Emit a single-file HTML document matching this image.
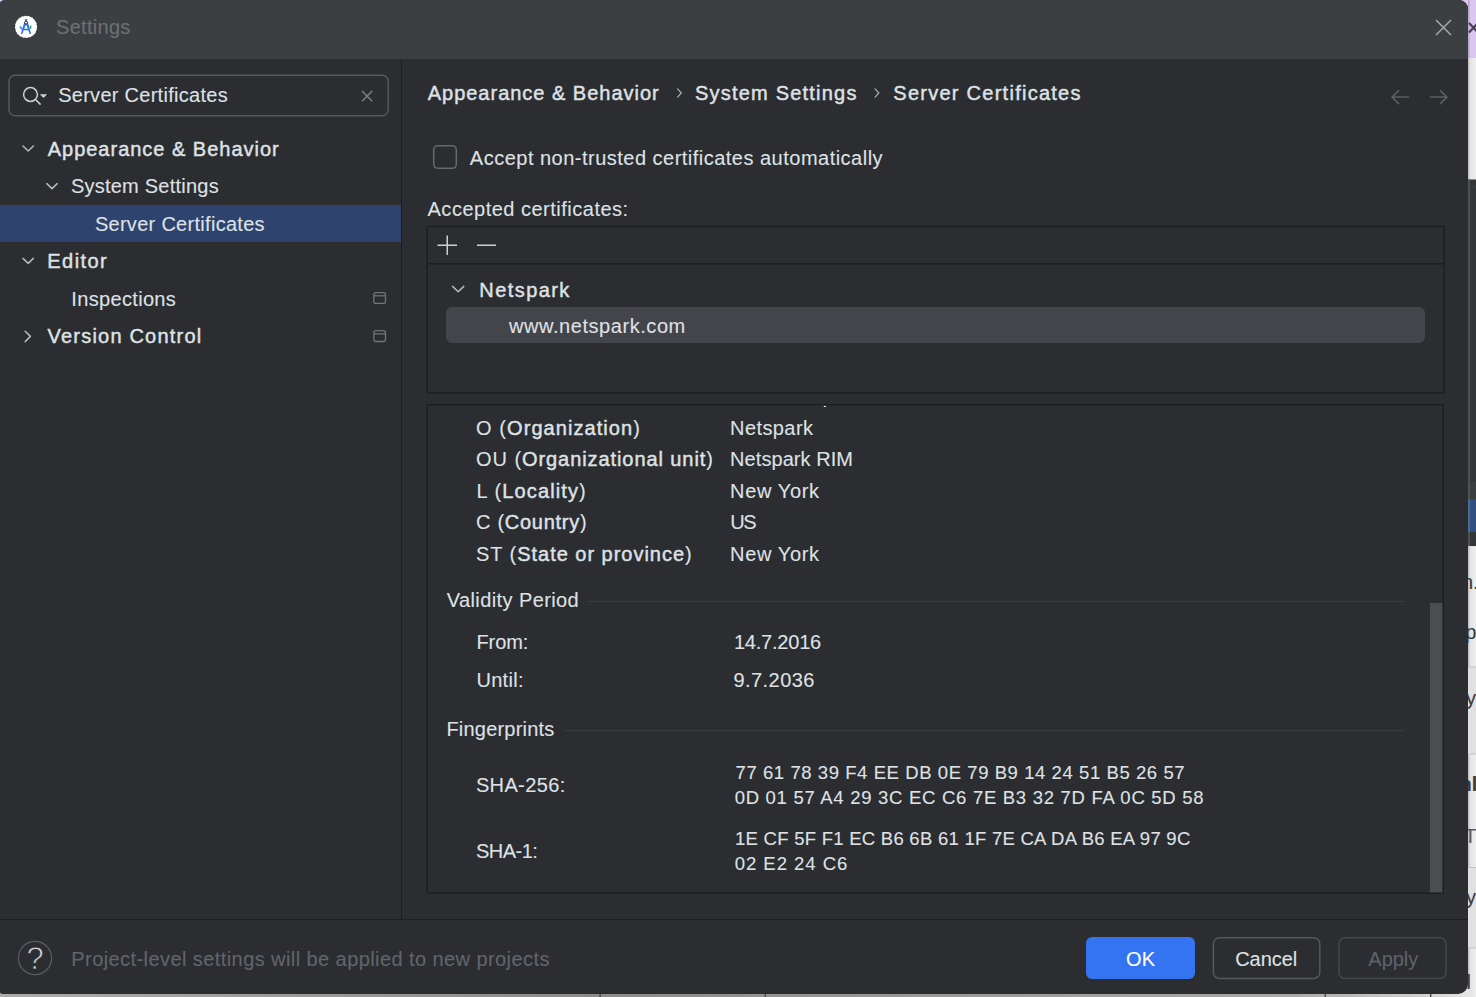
<!DOCTYPE html>
<html lang="en"><head><meta charset="utf-8"><title>Settings</title>
<style>
html,body{margin:0;padding:0}
body{width:1476px;height:997px;overflow:hidden;position:relative;background:#f2f2f2;font-family:"Liberation Sans",sans-serif;}
#back{position:absolute;left:0;top:0;width:1476px;height:997px;}
#dlg{position:absolute;left:0;top:0;width:1468px;height:994px;background:#2b2d30;border-radius:6px 9px 10px 4px / 3px 9px 10px 2px;overflow:hidden;}
#titlebar{position:absolute;left:0;top:0;width:1468px;height:59px;background:#3c3f41;}
#sel{position:absolute;left:0;top:205px;width:401px;height:37px;background:#2e436e;}
#vdiv{position:absolute;left:401px;top:59px;width:1px;height:860px;background:#1e1f22;}
#hdiv{position:absolute;left:0;top:919px;width:1468px;height:1px;background:#1e1f22;}
#hl{position:absolute;left:446px;top:307px;width:979px;height:36px;background:#43454a;border-radius:6px;}
#ok{position:absolute;left:1086px;top:937px;width:109px;height:42px;background:#3574f0;border-radius:6px;}
.t{position:absolute;white-space:pre;line-height:1;}
.t{-webkit-text-stroke:0.1px}
.t b,.sb{font-weight:400;-webkit-text-stroke:0.45px}
.t.q{-webkit-text-stroke:0.75px #2b2d30}
.bgt{font-size:20px;color:#3a3a3a;}
svg{position:absolute;left:0;top:0;}
.grp{display:contents}
</style></head><body>
<svg id="back" width="1476" height="997" viewBox="0 0 1476 997">
 <defs>
  <linearGradient id="gb" x1="0" x2="1" y1="0" y2="0">
   <stop offset="0" stop-color="#ababab"/><stop offset="0.4" stop-color="#8b8b8b"/><stop offset="0.88" stop-color="#a8a8a8"/><stop offset="0.97" stop-color="#d0d0d0"/><stop offset="1" stop-color="#e6e6e6"/>
  </linearGradient>
  <linearGradient id="gs" x1="0" x2="1" y1="0" y2="0">
   <stop offset="0" stop-color="#bdbdbd"/><stop offset="0.3" stop-color="#e4e4e4"/><stop offset="1" stop-color="#efefef"/>
  </linearGradient>
 </defs>
 <rect x="0" y="0" width="1476" height="60" fill="#dac6f0"/>
 <rect x="1468" y="0" width="1.6" height="58" fill="#b9a9cc"/>
 <path d="M1469 23 L1478 32.5 M1478 23 L1469 32.5" stroke="#473f55" stroke-width="2.2"/>
 <rect x="1460" y="58" width="16" height="122" fill="#ececec"/>
 <rect x="1468" y="58" width="8" height="122" fill="url(#gs)"/>
 <rect x="1460" y="179.5" width="16" height="367" fill="#333537"/>
 <rect x="1468" y="179.5" width="2" height="367" fill="#4f5254"/>
 <rect x="1470" y="186.5" width="6" height="1" fill="#3f4143"/>
 <rect x="1470" y="482" width="6" height="1.2" fill="#26282a"/>
 <rect x="1470" y="482" width="6" height="17" fill="#3b3d3f"/>
 <rect x="1468" y="499.3" width="8" height="32.7" fill="#305080"/>
 <rect x="1468" y="499.3" width="2" height="32.7" fill="#4d6a92"/>
 <rect x="1460" y="546.3" width="16" height="451" fill="#ececec"/>
 <rect x="1468" y="546.3" width="8" height="451" fill="url(#gs)"/>
 <rect x="1468" y="667" width="8" height="87" fill="#e1e1e1"/>
 <rect x="1468" y="867.5" width="8" height="80.5" fill="#e1e1e1"/>
 <rect x="1468" y="666.5" width="8" height="1" fill="#c4c4c4"/>
 <rect x="1468" y="753.5" width="8" height="1" fill="#c4c4c4"/>
 <rect x="1468" y="867" width="8" height="1" fill="#c4c4c4"/>
 <rect x="1468" y="947.5" width="8" height="1" fill="#c4c4c4"/>
 <rect x="0" y="988" width="1470" height="9" fill="url(#gb)"/>
 <rect x="599.4" y="994" width="1.4" height="3" fill="#4a4a4a"/>
 <rect x="764.6" y="994" width="1.4" height="3" fill="#4a4a4a"/>
 <rect x="1324.6" y="994" width="1.4" height="3" fill="#4a4a4a"/>
 <rect x="1430" y="994" width="1.4" height="3" fill="#4a4a4a"/>
</svg>
<span class="t bgt" style="left:1462px;top:572.4px;">n.</span>
<span class="t bgt" style="left:1465.3px;top:622px;">p</span>
<span class="t bgt" style="left:1466px;top:688px;">y</span>
<span class="t bgt" style="left:1459.5px;top:773.5px;font-weight:700;">nl</span>
<span class="t bgt" style="left:1464.2px;top:826.4px;color:#5a5a5a">T</span>
<span class="t bgt" style="left:1466px;top:886.5px;">y</span>
<span class="t bgt" style="left:1466.6px;top:972px;">l</span>
<div id="dlg">
 <div id="titlebar"></div>
 <div id="sel"></div>
 <div id="vdiv"></div>
 <div id="hdiv"></div>
 <div id="hl"></div>
 <div id="ok"></div>
 <svg width="1468" height="994" viewBox="0 0 1468 994" fill="none">
  <!-- app icon -->
  <circle cx="26.05" cy="26.95" r="11.1" fill="#ffffff"/>
  <circle cx="26.05" cy="26.95" r="11.3" stroke="#33363a" stroke-width="0.9" stroke-dasharray="1.6 1.95"/>
  <path d="M25.05 19 h2 v2.4 h-2z" fill="#3a7cf2"/>
  <path d="M24.1 22.8 L26.6 22.8 L22.3 34 L20.8 34 Z M25.5 22.8 L28 22.8 L31.2 34 L29.7 34 Z" fill="#2f72ec"/>
  <path d="M23.3 29.5 H28.9" stroke="#2f72ec" stroke-width="1.5"/>
  <path d="M19.9 26.4 L22.4 29.6" stroke="#3f86f6" stroke-width="1.7"/>
  <circle cx="26.05" cy="22.6" r="1.5" fill="#ffffff" stroke="#20242a" stroke-width="1"/>
  <rect x="29.8" y="25.4" width="1.5" height="3.4" fill="#3aa757"/>
  <!-- close -->
  <path d="M1436 20 L1451 35 M1451 20 L1436 35" stroke="#a4a7ac" stroke-width="1.5"/>
  <!-- search box -->
  <rect x="9" y="75.3" width="379.2" height="40.4" rx="6" stroke="#55585e" stroke-width="1.5"/>
  <circle cx="30.5" cy="94.5" r="6.9" stroke="#ced0d6" stroke-width="1.5"/>
  <path d="M35.5 99.5 L40.6 104.6" stroke="#ced0d6" stroke-width="1.5"/>
  <path d="M39.8 94.3 H47.2 L43.5 98.1 Z" fill="#ced0d6"/>
  <path d="M362 91 L372.2 101.2 M372.2 91 L362 101.2" stroke="#7e828a" stroke-width="1.4"/>
  <!-- tree chevrons -->
  <g stroke="#b4b8bf" stroke-width="1.5" stroke-linecap="round" stroke-linejoin="round">
   <path d="M23 146 L28.2 151 L33.4 146"/>
   <path d="M46.8 183.6 L52 188.6 L57.2 183.6"/>
   <path d="M23 258.4 L28.2 263.4 L33.4 258.4"/>
   <path d="M25.2 331.2 L30.4 336.4 L25.2 341.6"/>
   <path d="M452.6 286.4 L458.2 291.8 L463.8 286.4"/>
  </g>
  <!-- project-level icons -->
  <g stroke="#6f737a" stroke-width="1.3">
   <rect x="373.8" y="292.6" width="11.7" height="10.8" rx="2.2"/>
   <path d="M373.8 295.8 H385.5"/>
   <rect x="373.8" y="330.7" width="11.7" height="10.8" rx="2.2"/>
   <path d="M373.8 333.9 H385.5"/>
  </g>
  <!-- breadcrumb chevrons -->
  <g stroke="#a8abb2" stroke-width="1.25" stroke-linecap="round" stroke-linejoin="round">
   <path d="M677.6 88.9 L681.3 93 L677.6 97.1"/>
   <path d="M875.1 88.9 L878.8 93 L875.1 97.1"/>
  </g>
  <!-- nav arrows -->
  <g stroke="#5a5d63" stroke-width="1.5" stroke-linecap="round" stroke-linejoin="round">
   <path d="M1408.6 97.1 H1392 M1398.6 90.6 L1392 97.1 L1398.6 103.6"/>
   <path d="M1430.4 97.1 H1447 M1440.4 90.6 L1447 97.1 L1440.4 103.6"/>
  </g>
  <!-- checkbox -->
  <rect x="433.7" y="145.7" width="22.6" height="22.6" rx="4" stroke="#666a70" stroke-width="1.5"/>
  <!-- table 1 -->
  <rect x="427.2" y="226.4" width="1017" height="166.3" stroke="#1e1f22" stroke-width="1.5"/>
  <path d="M427 263.7 H1444" stroke="#1e1f22" stroke-width="1.5"/>
  <path d="M447.25 235.5 V255 M437.5 245.25 H457 M477 245.25 H496" stroke="#ced0d6" stroke-width="1.5"/>
  <!-- details panel -->
  <rect x="427.2" y="404.7" width="1016" height="488.5" stroke="#1e1f22" stroke-width="1.5"/>
  <rect x="823.8" y="405.9" width="2.2" height="1.1" fill="#e6e8ec"/>
  <path d="M588 601.5 H1404 M564.2 730.7 H1404" stroke="#393b40" stroke-width="1.2"/>
  <!-- scrollbar -->
  <rect x="1430" y="603" width="12.4" height="289.4" fill="#4c4d51"/>
  <!-- footer -->
  <circle cx="35" cy="958" r="16.6" stroke="#5a5d63" stroke-width="1.2"/>
  <rect x="1213.4" y="937.8" width="106.4" height="40.6" rx="6" stroke="#54575d" stroke-width="1.5"/>
  <rect x="1339" y="937.8" width="107" height="40.6" rx="6" stroke="#44464b" stroke-width="1.5"/>
 </svg>
 <span class="t q" style="left:26.5px;top:942.9px;font-size:31px;color:#d4d6db;">?</span>
<div class="grp" id="title">
 <span class="t" style="left:56.07px;top:16.77px;font-size:20px;letter-spacing:0.289px;color:#6c6f74;">Settings</span>
</div>
<div class="grp" id="sidebar">
 <span class="t" style="left:58.15px;top:85.07px;font-size:20px;letter-spacing:0.278px;color:#dfe1e5;">Server Certificates</span>
 <span class="t sb" style="left:47.73px;top:139.07px;font-size:20px;letter-spacing:0.986px;color:#dfe1e5;">Appearance &amp; Behavior</span>
 <span class="t" style="left:70.88px;top:176.07px;font-size:20px;letter-spacing:0.239px;color:#dfe1e5;">System Settings</span>
 <span class="t" style="left:94.88px;top:213.57px;font-size:20px;letter-spacing:0.292px;color:#dfe1e5;">Server Certificates</span>
 <span class="t sb" style="left:47.36px;top:251.07px;font-size:20px;letter-spacing:1.418px;color:#dfe1e5;">Editor</span>
 <span class="t" style="left:71.36px;top:288.57px;font-size:20px;letter-spacing:0.328px;color:#dfe1e5;">Inspections</span>
 <span class="t sb" style="left:47.58px;top:326.07px;font-size:20px;letter-spacing:1.203px;color:#dfe1e5;">Version Control</span>
</div>
<div class="grp" id="content">
 <span class="t sb" style="left:427.73px;top:83.07px;font-size:20px;letter-spacing:0.986px;color:#dfe1e5;">Appearance &amp; Behavior</span>
 <span class="t sb" style="left:695.09px;top:83.07px;font-size:20px;letter-spacing:1.203px;color:#dfe1e5;">System Settings</span>
 <span class="t sb" style="left:893.33px;top:83.07px;font-size:20px;letter-spacing:1.26px;color:#dfe1e5;">Server Certificates</span>
 <span class="t" style="left:469.86px;top:148.07px;font-size:20px;letter-spacing:0.487px;color:#dfe1e5;">Accept non-trusted certificates automatically</span>
 <span class="t" style="left:427.54px;top:199.07px;font-size:20px;letter-spacing:0.502px;color:#dfe1e5;">Accepted certificates:</span>
 <span class="t sb" style="left:479.36px;top:279.87px;font-size:20px;letter-spacing:1.412px;color:#dfe1e5;">Netspark</span>
 <span class="t" style="left:509.03px;top:316.07px;font-size:20px;letter-spacing:0.56px;color:#dfe1e5;">www.netspark.com</span>
 <span class="t" style="left:476.10px;top:417.57px;font-size:20px;letter-spacing:1.063px;color:#dfe1e5;">O (<b>Organization</b>)</span>
 <span class="t" style="left:730.12px;top:417.57px;font-size:20px;letter-spacing:0.403px;color:#dfe1e5;">Netspark</span>
 <span class="t" style="left:476.10px;top:449.07px;font-size:20px;letter-spacing:0.92px;color:#dfe1e5;">OU (<b>Organizational unit</b>)</span>
 <span class="t" style="left:730.12px;top:449.07px;font-size:20px;letter-spacing:0.06px;color:#dfe1e5;">Netspark RIM</span>
 <span class="t" style="left:476.41px;top:480.57px;font-size:20px;letter-spacing:1.108px;color:#dfe1e5;">L (<b>Locality</b>)</span>
 <span class="t" style="left:730.12px;top:480.57px;font-size:20px;letter-spacing:0.618px;color:#dfe1e5;">New York</span>
 <span class="t" style="left:476.01px;top:512.07px;font-size:20px;letter-spacing:0.717px;color:#dfe1e5;">C (<b>Country</b>)</span>
 <span class="t" style="left:730.13px;top:512.07px;font-size:20px;letter-spacing:-1.278px;color:#dfe1e5;">US</span>
 <span class="t" style="left:475.88px;top:543.57px;font-size:20px;letter-spacing:0.977px;color:#dfe1e5;">ST (<b>State or province</b>)</span>
 <span class="t" style="left:730.12px;top:543.57px;font-size:20px;letter-spacing:0.618px;color:#dfe1e5;">New York</span>
 <span class="t" style="left:446.72px;top:589.57px;font-size:20px;letter-spacing:0.403px;color:#dfe1e5;">Validity Period</span>
 <span class="t" style="left:476.41px;top:631.82px;font-size:20px;letter-spacing:-0.071px;color:#dfe1e5;">From:</span>
 <span class="t" style="left:733.93px;top:631.82px;font-size:20px;letter-spacing:-0.211px;color:#dfe1e5;">14.7.2016</span>
 <span class="t" style="left:476.43px;top:669.82px;font-size:20px;letter-spacing:0.296px;color:#dfe1e5;">Until:</span>
 <span class="t" style="left:733.43px;top:669.82px;font-size:20px;letter-spacing:0.452px;color:#dfe1e5;">9.7.2036</span>
 <span class="t" style="left:446.41px;top:718.82px;font-size:20px;letter-spacing:0.209px;color:#dfe1e5;">Fingerprints</span>
 <span class="t" style="left:475.88px;top:775.32px;font-size:20px;letter-spacing:0.373px;color:#dfe1e5;">SHA-256:</span>
 <span class="t" style="left:475.88px;top:841.07px;font-size:20px;letter-spacing:-0.5px;color:#dfe1e5;">SHA-1:</span>
 <span class="t" style="left:735.52px;top:764.34px;font-size:18.5px;letter-spacing:0.572px;color:#dfe1e5;">77 61 78 39 F4 EE DB 0E 79 B9 14 24 51 B5 26 57</span>
 <span class="t" style="left:734.65px;top:789.34px;font-size:18.5px;letter-spacing:0.714px;color:#dfe1e5;">0D 01 57 A4 29 3C EC C6 7E B3 32 7D FA 0C 5D 58</span>
 <span class="t" style="left:735.03px;top:830.34px;font-size:18.5px;letter-spacing:0.262px;color:#dfe1e5;">1E CF 5F F1 EC B6 6B 61 1F 7E CA DA B6 EA 97 9C</span>
 <span class="t" style="left:734.65px;top:855.34px;font-size:18.5px;letter-spacing:0.988px;color:#dfe1e5;">02 E2 24 C6</span>
</div>
<div class="grp" id="footer">
 <span class="t" style="left:71.33px;top:948.57px;font-size:20px;letter-spacing:0.421px;color:#62656b;">Project-level settings will be applied to new projects</span>
 <span class="t" style="left:1125.96px;top:948.77px;font-size:20px;letter-spacing:0.149px;color:#ffffff;">OK</span>
 <span class="t" style="left:1235.18px;top:948.77px;font-size:20px;letter-spacing:-0.054px;color:#dfe1e5;">Cancel</span>
 <span class="t" style="left:1368.36px;top:948.77px;font-size:20px;letter-spacing:-0.049px;color:#5f6269;">Apply</span>
</div>
</div>
</body></html>
